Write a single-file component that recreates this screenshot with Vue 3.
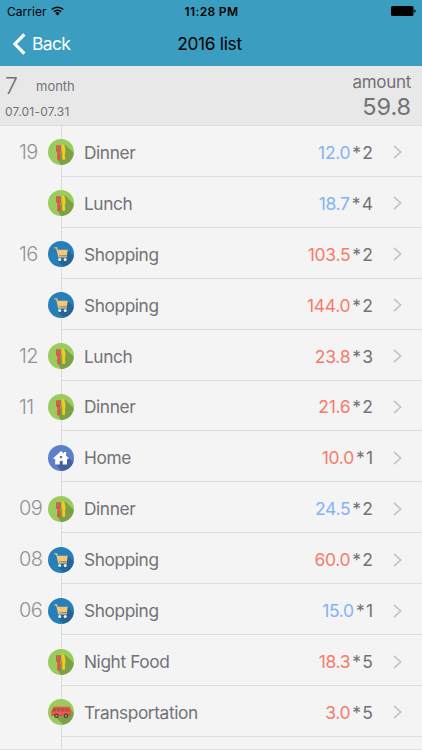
<script setup>
const rows = [
  { day: "19", icon: "food", name: "Dinner", price: "12.0", count: 2, color: "blue" },
  { day: "", icon: "food", name: "Lunch", price: "18.7", count: 4, color: "blue" },
  { day: "16", icon: "cart", name: "Shopping", price: "103.5", count: 2, color: "red" },
  { day: "", icon: "cart", name: "Shopping", price: "144.0", count: 2, color: "red" },
  { day: "12", icon: "food", name: "Lunch", price: "23.8", count: 3, color: "red" },
  { day: "11", icon: "food", name: "Dinner", price: "21.6", count: 2, color: "red" },
  { day: "", icon: "home", name: "Home", price: "10.0", count: 1, color: "red" },
  { day: "09", icon: "food", name: "Dinner", price: "24.5", count: 2, color: "blue" },
  { day: "08", icon: "cart", name: "Shopping", price: "60.0", count: 2, color: "red" },
  { day: "06", icon: "cart", name: "Shopping", price: "15.0", count: 1, color: "blue" },
  { day: "", icon: "food", name: "Night Food", price: "18.3", count: 5, color: "red" },
  { day: "", icon: "bus", name: "Transportation", price: "3.0", count: 5, color: "red" },
];
</script>

<template>
  <div class="screen">
    <header class="top">
      <div class="status">
        <div class="status__left">
          <span class="status__carrier">Carrier</span>
          <svg class="status__wifi" width="13" height="10" viewBox="0 0 13 10">
            <g fill="none" stroke="#000" stroke-width="1.5">
              <path d="M.8 3.5a8.1 8.1 0 0 1 11.4 0" />
              <path d="M2.9 5.7a5.1 5.1 0 0 1 7.2 0" />
            </g>
            <path d="M4.3 7.2a3.1 3.1 0 0 1 4.4 0L6.5 9.5z" />
          </svg>
        </div>
        <span class="status__time">11:28 PM</span>
        <svg class="status__battery" width="25" height="10" viewBox="0 0 25 10">
          <rect width="22.5" height="10" rx="1.6" />
          <path d="M23.3 3.2c1.8.5 1.8 3.1 0 3.6z" />
        </svg>
      </div>
      <nav class="nav">
        <a class="nav__back" href="#">
          <svg width="14" height="22" viewBox="0 0 14 22">
            <path d="M12.4 1.3 2.9 11l9.5 9.7" fill="none" stroke="#fff" stroke-width="3.2" />
          </svg>
          <span class="nav__label">Back</span>
        </a>
        <span class="nav__title">2016 list</span>
      </nav>
    </header>

    <section class="summary">
      <div class="summary__period">
        <div class="summary__month">
          <span class="summary__number">7</span>
          <span class="summary__word">month</span>
        </div>
        <span class="summary__range">07.01-07.31</span>
      </div>
      <div class="summary__total">
        <span class="summary__amount">amount</span>
        <span class="summary__value">59.8</span>
      </div>
    </section>

    <ul class="list">
      <li v-for="(row, index) in rows" :key="index" class="row">
        <span class="row__day">{{ row.day }}</span>
        <div class="row__body">
          <svg class="row__icon" width="26" height="26" viewBox="0 0 26 26">
            <template v-if="row.icon === 'food'">
              <circle cx="13" cy="13" r="13" fill="#99cc5c" />
              <path d="M17 5.5 25.7 14A13 13 0 0 1 13 26L9.4 20.5z" fill="#7c9f49" />
              <path d="M8 6.3h5v4.9c0 1.2-.5 1.8-.9 2.1l.3 6.6c0 1.7-3.4 1.7-3.3 0l.3-6.6c-.7-.3-1.4-.9-1.4-2.1z" fill="#dc5548" />
              <path d="M9.6 6.3v4.2M11.4 6.3v4.2" stroke="#a9844a" stroke-width=".8" />
              <path d="M14.2 5c2.5.5 3.6 3.8 3.2 8.2l-.5 1.8.3 4.4c0 1.9-3 2-3 .1z" fill="#f3cd16" />
            </template>
            <template v-else-if="row.icon === 'cart'">
              <circle cx="13" cy="13" r="13" fill="#277fba" />
              <path d="m19.7 8.8 6 6.1A13 13 0 0 1 15.5 25.7L10 20z" fill="#256495" />
              <path d="M6.4 6.8h2.3l2.1 9h8.2" fill="none" stroke="#efc77f" stroke-width="1.3" />
              <path d="M9 8.8h10.8l-.9 5.8h-8.4z" fill="#f6c574" />
              <circle cx="11.7" cy="18.6" r="1.5" fill="#f4f4f4" />
              <circle cx="17.2" cy="18.6" r="1.5" fill="#f4f4f4" />
            </template>
            <template v-else-if="row.icon === 'home'">
              <circle cx="13" cy="13" r="13" fill="#5b7fc9" />
              <path d="m20.5 13 4.8 4A13 13 0 0 1 13.5 26L8 19.3z" fill="#465f9d" />
              <path d="m5.2 13.2 7.8-7.2 2.8 2.5V7h2.3v3.8l2.7 2.4-1 1-.8-.7v6h-4.3v-3.8h-3v3.8H7.2v-6l-.9.8z" fill="#fff" />
              <rect x="11.9" y="11" width="2.2" height="2.2" fill="#536fb0" />
            </template>
            <template v-else>
              <circle cx="13" cy="13" r="13" fill="#99cc5c" />
              <path d="m22.8 10 2.9 4.8A13 13 0 0 1 15.4 25.8L7 17.5z" fill="#7c9f49" />
              <path d="M5.4 7.8h15.4c1.3 0 2 1.2 2 3.4v5.8H3.2v-4.5z" fill="#e55447" />
              <path d="M5.6 9.4h15.2l.6 2.8H4.4z" fill="#ad5048" />
              <path d="M8.5 9v4M12.7 9v4M17 9v4" stroke="#e55447" />
              <path d="M3.2 14h19.6" stroke="#f06b5b" stroke-width=".7" />
              <g fill="#a9bc85" stroke="#4b3935" stroke-width="1.2">
                <circle cx="8.4" cy="16.8" r="1.6" />
                <circle cx="18" cy="16.8" r="1.6" />
              </g>
            </template>
          </svg>
          <span class="row__name">{{ row.name }}</span>
          <span class="row__price" :class="`row__price--${row.color}`">{{ row.price }}</span>
          <span class="row__times">*</span>
          <span class="row__count">{{ row.count }}</span>
          <svg class="row__arrow" width="9" height="14" viewBox="0 0 9 14">
            <path d="m1 .8 6.6 6.2L1 13.2" fill="none" stroke="#c4c4c7" stroke-width="1.7" />
          </svg>
        </div>
      </li>
    </ul>
    <div class="tail"></div>
  </div>
</template>

<style>
body {
  margin: 0;
}
</style>

<style scoped>
.screen {
  display: flex;
  flex-direction: column;
  box-sizing: border-box;
  width: 422px;
  height: 750px;
  overflow: hidden;
  background: #f4f4f4;
  border-bottom: 1px solid #dfdfe0;
  color: #727277;
  font-family: Inter, "Liberation Sans", sans-serif;
}

.top {
  height: 66px;
  flex: none;
  background: #3b9dbf;
  color: #000;
}

.status {
  display: grid;
  grid-template-columns: 1fr auto 1fr;
  align-items: center;
  height: 22px;
  padding: 0 6px 0 7px;
  font-size: 12px;
}

.status__left {
  display: flex;
  align-items: center;
  gap: 4px;
}

.status__carrier {
  letter-spacing: 0.05px;
}

.status__time {
  font-weight: 600;
  letter-spacing: 0.35px;
}

.status__battery {
  justify-self: end;
}

.nav {
  display: grid;
  grid-template-columns: 1fr auto 1fr;
  align-items: center;
  height: 43px;
  padding: 0 15px 0 12px;
}

.nav__back {
  display: flex;
  align-items: center;
  gap: 6px;
  color: #fff;
  text-decoration: none;
}

.nav__label {
  font-size: 17.5px;
  letter-spacing: -0.7px;
}

.nav__title {
  font-size: 17.3px;
  letter-spacing: -0.3px;
}

.summary {
  display: flex;
  justify-content: space-between;
  box-sizing: border-box;
  flex: none;
  height: 60px;
  padding: 0 11px 0 5px;
  background: #e8e8e8;
  border-bottom: 1px solid #dcdcdd;
}

.summary__month {
  display: flex;
  align-items: center;
  height: 39px;
}

.summary__number {
  width: 31px;
  font-size: 23px;
  font-weight: 300;
}

.summary__word {
  font-size: 13px;
}

.summary__range {
  display: block;
  font-size: 12px;
  line-height: 14px;
  letter-spacing: 0.25px;
}

.summary__total {
  display: flex;
  flex-direction: column;
  align-items: flex-end;
  padding-top: 5px;
}

.summary__amount {
  font-size: 17px;
  line-height: 22px;
  letter-spacing: -0.3px;
}

.summary__value {
  font-size: 23.5px;
  line-height: 28px;
  letter-spacing: -0.1px;
}

.list {
  margin: 0;
  padding: 0;
  list-style: none;
}

.row {
  display: flex;
  height: 50.92px;
}

.row__day {
  box-sizing: border-box;
  width: 61px;
  padding-left: 19px;
  font-size: 20px;
  font-weight: 300;
  line-height: 53px;
  letter-spacing: -0.6px;
  color: #929296;
}

.row__body {
  display: flex;
  align-items: center;
  box-sizing: border-box;
  flex: 1;
  padding: 3px 20px 0 0;
  border-left: 1px solid #dcdcde;
  border-bottom: 1px solid #dcdcde;
  font-size: 17.5px;
}

.row__icon {
  flex: none;
  margin-left: -14px;
}

.row__name {
  flex: 1;
  margin-left: 10px;
  font-size: 17.3px;
  letter-spacing: -0.4px;
}

.row__price {
  letter-spacing: -0.3px;
}

.row__price--blue {
  color: #83b3f5;
}

.row__price--red {
  color: #f77b6b;
}

.row__times {
  width: 10px;
  margin-left: 2px;
}

.row__count {
  margin-right: 20px;
}

.row__arrow {
  flex: none;
}

.tail {
  box-sizing: border-box;
  flex: 1;
  width: 62px;
  border-right: 1px solid #dcdcde;
}
</style>
